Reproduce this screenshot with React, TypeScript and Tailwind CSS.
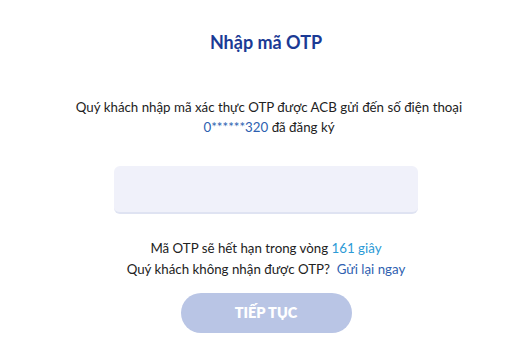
import React from "react";

export default function App() {
  return (
    <div
      className="w-[512px] h-[353px] bg-white flex flex-col items-center pl-5 text-[#222]"
      style={{ fontFamily: "Lato, 'Noto Sans', sans-serif" }}
    >
      <h1 className="mt-[30px] text-[18px] leading-6 font-bold text-[#1b3a95]">Nhập mã OTP</h1>
      <p className="mt-[43px] pl-[6px] text-[13.3px] leading-[20px] text-center">
        Quý khách nhập mã xác thực OTP được ACB gửi đến số điện thoại
        <br />
        <span className="text-[#2d5fb0]">0******320</span> đã đăng ký
      </p>
      <div className="mt-[29px] w-[304px] h-[48px] rounded-md bg-[#f0f1fa] border-b-2 border-[#dfe3f2]" />
      <p className="mt-[24px] text-[13.3px] leading-[21px] text-center">
        Mã OTP sẽ hết hạn trong vòng <span className="text-[#2c9ad6]">161 giây</span>
        <br />
        Quý khách không nhận được OTP?&nbsp; <span className="text-[#2f5fb0]">Gửi lại ngay</span>
      </p>
      <button className="mt-[13px] w-[171px] h-[40px] rounded-full bg-[#b9c5e5] text-white font-extrabold text-[14.5px]">
        TIẾP TỤC
      </button>
    </div>
  );
}
